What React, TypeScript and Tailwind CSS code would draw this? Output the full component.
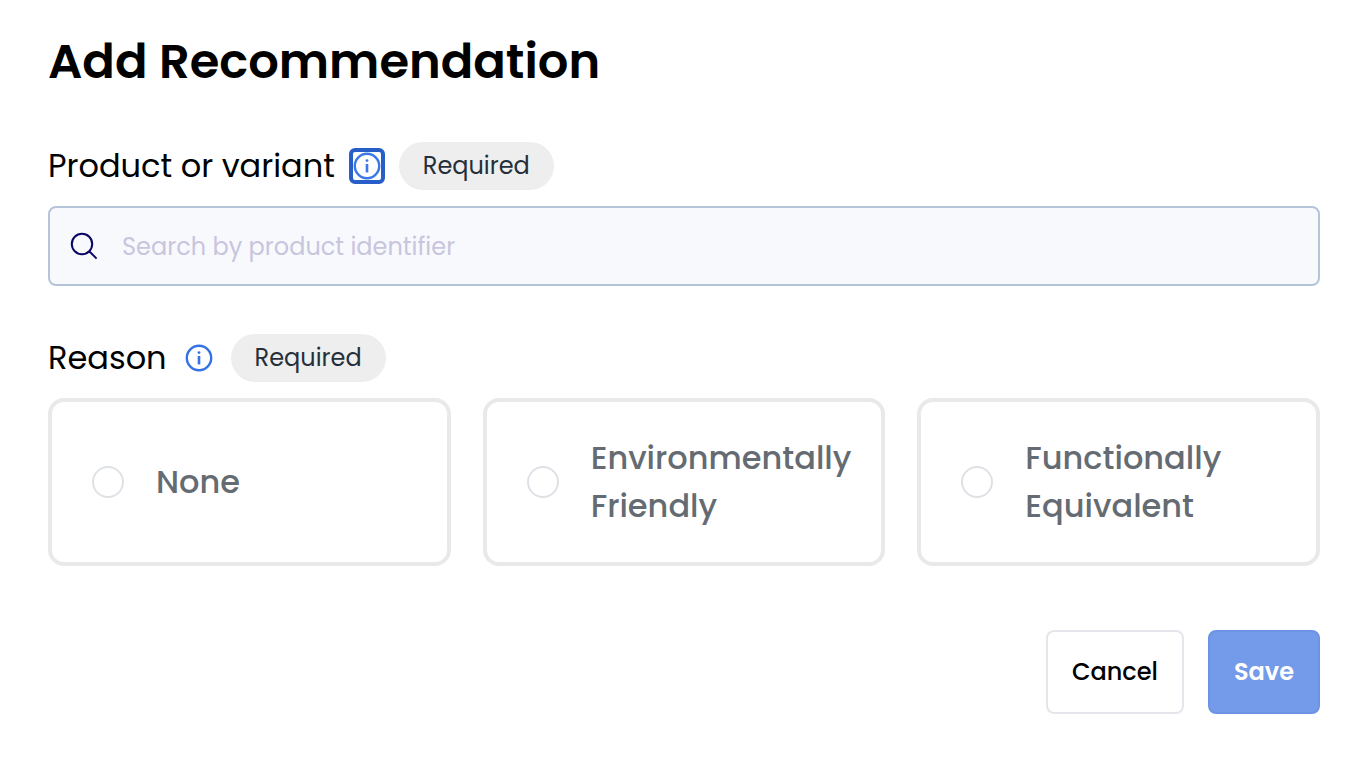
const InfoIcon = () => (
  <svg viewBox="0 0 28 28" className="size-7 shrink-0" fill="none" stroke="currentColor" aria-hidden="true">
    <circle cx="14" cy="14" r="12.2" strokeWidth="2.4" />
    <path d="M14 12v8.4" strokeWidth="2.6" />
    <circle cx="14" cy="8.6" r="1.4" fill="currentColor" stroke="none" />
  </svg>
);

const SearchIcon = () => (
  <svg viewBox="0 0 28 28" className="size-7 shrink-0 text-[#0b0666]" fill="none" stroke="currentColor" strokeWidth="2" aria-hidden="true">
    <circle cx="12" cy="12" r="10.2" />
    <path d="M19.2 19.2l7.4 7.4" />
  </svg>
);

const RequiredBadge = () => (
  <span className="flex h-12 items-center rounded-full bg-[#eeeeee] px-6 text-2xl text-[#252f3a]">Required</span>
);

const reasons = [
  { id: 'none', label: 'None' },
  { id: 'environment', label: 'Environmentally Friendly' },
  { id: 'equivalent', label: 'Functionally Equivalent' },
];

export default function App() {
  return (
    <form className="bg-white pt-6 pr-10 pb-11 pl-12 font-['Poppins','Inter',sans-serif] text-black">
      <h1 className="text-5xl leading-[76px] font-semibold">Add Recommendation</h1>

      <div className="mt-[42px] flex items-center">
        <label htmlFor="product" className="text-[32px] leading-12">Product or variant</label>
        <button
          type="button"
          aria-label="About product or variant"
          className="mr-3.5 ml-3.5 flex size-9 items-center justify-center rounded-md border-4 border-[#285ec8] text-[#3b78e7]"
        >
          <InfoIcon />
        </button>
        <RequiredBadge />
      </div>
      <div className="mt-4 flex h-20 items-center gap-6 rounded-lg border-2 border-[#b5c4d9] bg-[#f8f9fd] px-5">
        <SearchIcon />
        <input
          id="product"
          type="text"
          placeholder="Search by product identifier"
          className="h-full min-w-0 flex-1 bg-transparent text-2xl outline-none placeholder:text-[#c8c5dd]"
        />
      </div>

      <fieldset className="mt-12">
        <div className="flex items-center">
          <span id="reason-label" className="text-[32px] leading-12">Reason</span>
          <button
            type="button"
            aria-label="About reason"
            className="mr-3.5 ml-3.5 flex size-9 items-center justify-center text-[#3572e6]"
          >
            <InfoIcon />
          </button>
          <RequiredBadge />
        </div>
        <div role="radiogroup" aria-labelledby="reason-label" className="mt-4 grid grid-cols-3 gap-8">
          {reasons.map((reason) => (
            <label
              key={reason.id}
              htmlFor={reason.id}
              className="flex min-h-42 items-center gap-8 rounded-2xl border-4 border-[#e9e9e9] py-8 pr-5 pl-10"
            >
              <input
                id={reason.id}
                type="radio"
                name="reason"
                className="size-8 shrink-0 appearance-none rounded-full border-2 border-[#dee2e6] checked:border-8 checked:border-[#3572e6]"
              />
              <span className="text-[32px] leading-12 font-medium text-[#656b72]">{reason.label}</span>
            </label>
          ))}
        </div>
      </fieldset>

      <div className="mt-16 flex justify-end gap-6">
        <button type="button" className="h-21 rounded-lg border-2 border-[#e5e6eb] px-6 text-2xl font-medium">
          Cancel
        </button>
        <button type="submit" className="h-21 rounded-lg border-2 border-[#6d94e3] bg-[#749be9] px-6 text-2xl font-semibold text-white">
          Save
        </button>
      </div>
    </form>
  );
}
